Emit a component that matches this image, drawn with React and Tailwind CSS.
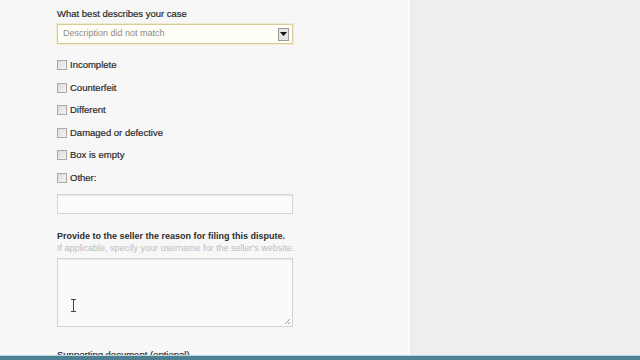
import React from 'react';

const reasons = ['Incomplete', 'Counterfeit', 'Different', 'Damaged or defective', 'Box is empty', 'Other:'];

const Checkbox = ({ label }) => (
  <label className="flex items-center h-[22.5px] gap-[3px]">
    <span className="w-[10px] h-[10px] border border-[#a9a9a9] bg-gradient-to-br from-[#dcdcdc] to-[#f4f4f4]" />
    <span className="text-[9.5px] text-[#2a2a2a] [-webkit-text-stroke:0.2px_#2a2a2a]">{label}</span>
  </label>
);

const App = () => {
  return (
    <div className="w-[640px] h-[360px] overflow-hidden flex flex-col bg-[#f7f7f7] font-['Liberation_Sans',sans-serif]">
      <div className="flex flex-1 min-h-0">
        <div className="w-[408px] bg-[#f7f7f7] pl-[57px] pt-[8px] overflow-hidden">
          <div className="text-[9.5px] text-[#2a2a2a] [-webkit-text-stroke:0.2px_#2a2a2a] h-[15px] leading-[12px]">What best describes your case</div>
          <div className="w-[236px] h-[20px] mt-[1px] border border-[#d9cc9c] bg-[#fffef6] flex items-center pl-[5px] pr-[3px] shadow-[0_0_0_1px_#f1ebcf]">
            <span className="flex-1 text-[9px] text-[#8a8a8a]">Description did not match</span>
            <span className="w-[11px] h-[13px] border border-[#9a9a9a] bg-[#e4e4e4] flex items-center justify-center">
              <svg width="7" height="4" viewBox="0 0 7 4"><path d="M0 0h7L3.5 4z" fill="#111" /></svg>
            </span>
          </div>
          <div className="mt-[10px] flex flex-col">
            {reasons.map((r) => <Checkbox key={r} label={r} />)}
          </div>
          <div className="w-[236px] h-[20px] mt-[5px] border border-[#d6d6d6] bg-[#fbfbfb] shadow-[inset_0_1px_1px_#e6e6e6]" />
          <div className="mt-[16px] text-[9px] font-bold text-[#2e2e2e] leading-[12px]">Provide to the seller the reason for filing this dispute.</div>
          <div className="text-[9px] text-[#bdbdbd] leading-[12px]">If applicable, specify your username for the seller's website.</div>
          <div className="relative w-[236px] h-[69px] mt-[4px] border border-[#d4d4d4] bg-[#fafafa] shadow-[inset_0_1px_1px_#e8e8e8]">
            <svg className="absolute left-[12px] top-[40px]" width="7" height="13" viewBox="0 0 7 13">
              <path d="M1 0.5h5M1 12.5h5M3.5 0.5v12" stroke="#444" strokeWidth="1" fill="none" />
            </svg>
            <svg className="absolute right-[1px] bottom-[1px]" width="7" height="7" viewBox="0 0 7 7">
              <path d="M6 1L1 6M6 4L4 6" stroke="#9a9a9a" strokeWidth="1" />
            </svg>
          </div>
          <div className="mt-[22px] text-[9.5px] text-[#2a2a2a] [-webkit-text-stroke:0.2px_#2a2a2a] leading-[12px]">Supporting document (optional).</div>
        </div>
        <div className="w-[2px] bg-[#fcfcfc]" />
        <div className="flex-1 bg-[#eeeeee]" />
      </div>
      <div className="h-[5px] flex flex-col">
        <div className="h-[1px] bg-[#b9d6e0]" />
        <div className="flex-1 bg-[#4f7f93]" />
      </div>
    </div>
  );
};

export default App;
